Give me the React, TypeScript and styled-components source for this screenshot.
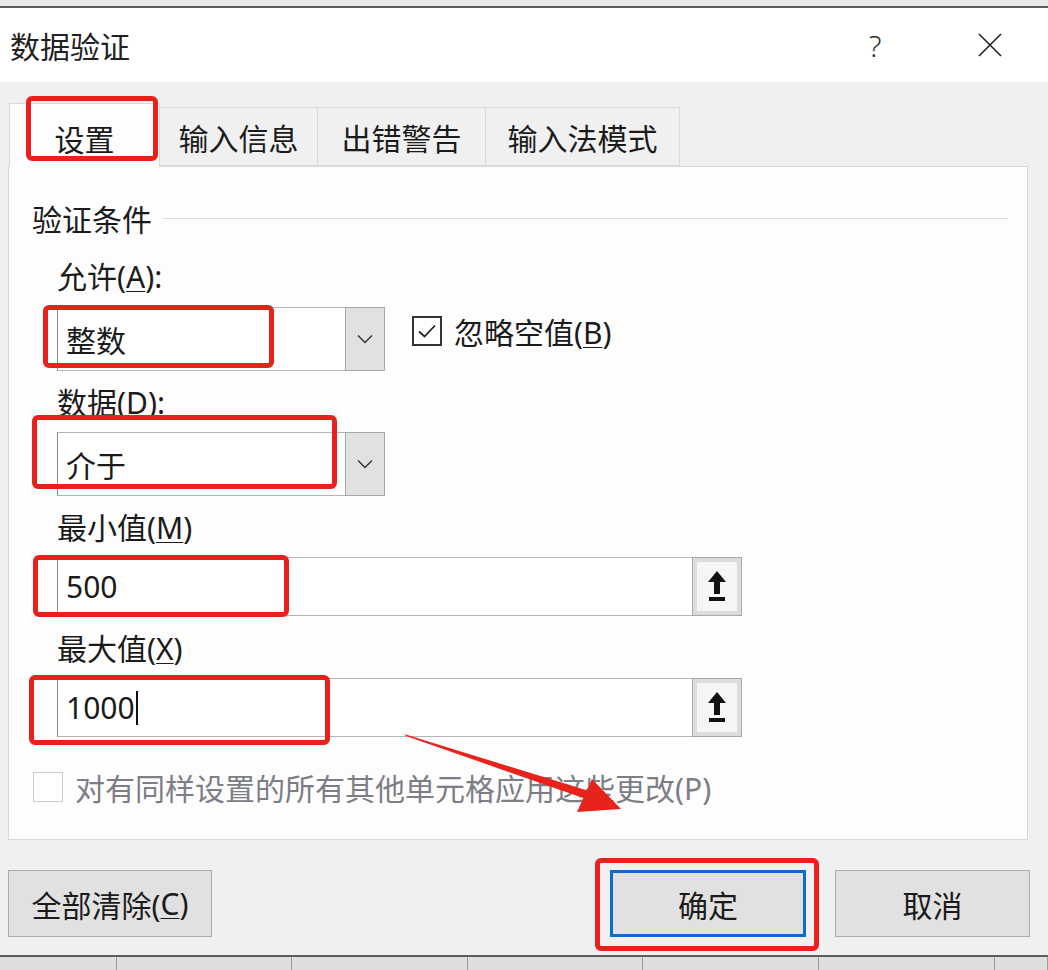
import React from 'react';
import styled, { createGlobalStyle } from 'styled-components';

const GlobalStyle = createGlobalStyle`
    html,
    body {
        margin: 0;
        padding: 0;
        background: #f0f0f0;
    }

    body {
        font-family: 'Noto Sans', 'Noto Sans CJK SC', sans-serif;
    }
`;

const Window = styled.div`
    position: relative;
    width: 1048px;
    height: 970px;
    display: flex;
    flex-direction: column;
    overflow: hidden;
    color: #1b1b1b;
    font-size: 30px;
`;

const TopEdge = styled.div`
    height: 6px;
    background: #e8e8e8;
    border-bottom: 2px solid #5c5c5c;
`;

const TitleBar = styled.div`
    height: 74px;
    background: #ffffff;
    display: flex;
    align-items: center;
    padding: 0 28px 0 10px;
`;

const Title = styled.div`
    flex: 1;
    font-size: 30px;
    color: #222;
`;

const TitleButton = styled.div`
    width: 60px;
    height: 60px;
    display: flex;
    align-items: center;
    justify-content: center;
    font-size: 30px;
    font-weight: 300;
    color: #333;

    & + & {
        margin-left: 55px;
    }
`;

const Body = styled.div`
    flex: 1;
    display: flex;
    flex-direction: column;
    background: #f0f0f0;
    padding: 21px 20px 0 8px;
`;

const TabStrip = styled.div`
    position: relative;
    z-index: 1;
    display: flex;
    align-items: flex-end;
    height: 63px;
    padding-left: 1px;
`;

const Tab = styled.div<{ $width: number; $active?: boolean }>`
    box-sizing: border-box;
    width: ${p => p.$width}px;
    height: ${p => (p.$active ? 64 : 59)}px;
    margin-bottom: ${p => (p.$active ? -1 : 0)}px;
    display: flex;
    align-items: center;
    justify-content: center;
    padding-top: ${p => (p.$active ? 4 : 0)}px;
    background: ${p => (p.$active ? '#fdfdfd' : '#f0f0f0')};
    border: 1px solid #d9d9d9;
    border-bottom: ${p => (p.$active ? 'none' : '1px solid #d9d9d9')};

    & + & {
        border-left: none;
    }
`;

const Panel = styled.div`
    box-sizing: border-box;
    width: 1020px;
    height: 674px;
    background: #fdfdfd;
    border: 1px solid #d9d9d9;
    padding: 0 19px 0 23px;
    display: flex;
    flex-direction: column;
`;

const GroupHeader = styled.div`
    display: flex;
    align-items: center;
    gap: 11px;
    height: 36px;
    margin-top: 33px;
`;

const GroupRule = styled.div`
    flex: 1;
    height: 1px;
    background: #dcdcdc;
`;

const FieldArea = styled.div`
    display: flex;
    flex-direction: column;
    padding-left: 25px;
`;

const FieldLabel = styled.div<{ $gap: number }>`
    height: 36px;
    line-height: 36px;
    margin-top: ${p => p.$gap}px;
    margin-bottom: ${p => (p.$gap > 20 ? 12 : 11)}px;
`;

const Key = styled.span`
    text-decoration: underline;
    text-underline-offset: 3px;
    text-decoration-thickness: 1px;
`;

const ComboRow = styled.div`
    display: flex;
    align-items: flex-start;
`;

const Combo = styled.div`
    display: flex;
    width: 328px;
    height: 64px;
`;

const InputField = styled.div`
    box-sizing: border-box;
    flex: 1;
    display: flex;
    align-items: center;
    padding-left: 8px;
    background: #ffffff;
    border: 1px solid #b4b4b4;
    border-left-color: #8a8a8a;
    border-right: none;
`;

const DropButton = styled.div`
    box-sizing: border-box;
    width: 40px;
    display: flex;
    align-items: center;
    justify-content: center;
    background: #e1e1e1;
    border: 1px solid #a8a8a8;
`;

const CheckOption = styled.label<{ $disabled?: boolean }>`
    display: flex;
    align-items: center;
    gap: 12px;
    height: 30px;
    color: ${p => (p.$disabled ? '#7d7d85' : 'inherit')};
`;

const OptionNextToCombo = styled(CheckOption)`
    margin: 9px 0 0 27px;
`;

const ApplyOption = styled(CheckOption)`
    margin: 35px 0 0 1px;
`;

const Box = styled.span<{ $disabled?: boolean }>`
    box-sizing: border-box;
    width: 30px;
    height: 30px;
    display: flex;
    align-items: center;
    justify-content: center;
    background: #ffffff;
    border: ${p => (p.$disabled ? '1px solid #cccccc' : '2px solid #333333')};
`;

const SpinInput = styled.div`
    display: flex;
    width: 685px;
    height: 59px;
`;

const SpinButton = styled.div`
    box-sizing: border-box;
    width: 50px;
    padding: 4px;
    background: #dcdcdc;
    border: 1px solid #a8a8a8;
`;

const SpinFace = styled.div`
    height: 100%;
    display: flex;
    align-items: center;
    justify-content: center;
    background: #f6f6f6;
`;

const Caret = styled.span`
    display: inline-block;
    width: 2px;
    height: 34px;
    margin-left: 1px;
    background: #111;
`;

const ButtonRow = styled.div`
    display: flex;
    margin: 30px -2px 0 0;
`;

const Button = styled.div<{ $width: number; $primary?: boolean }>`
    box-sizing: border-box;
    width: ${p => p.$width}px;
    height: 67px;
    display: flex;
    align-items: center;
    justify-content: center;
    background: #e1e1e1;
    border: ${p => (p.$primary ? '3px solid #0a6cd2' : '1px solid #adadad')};
`;

const Spacer = styled.div`
    flex: 1;
`;

const ButtonGap = styled.div`
    width: 29px;
`;

const BottomEdge = styled.div`
    height: 13px;
    display: flex;
    background: #dedede;
    border-top: 2px solid #5c5c5c;
`;

const GridCell = styled.div<{ $width: number }>`
    width: ${p => p.$width}px;
    border-right: 1px solid #9c9c9c;
    box-sizing: border-box;
`;

const Mark = styled.div<{ $x: number; $y: number; $w: number; $h: number }>`
    position: absolute;
    z-index: 2;
    left: ${p => p.$x}px;
    top: ${p => p.$y}px;
    width: ${p => p.$w}px;
    height: ${p => p.$h}px;
    box-sizing: border-box;
    border: 5px solid #e8221b;
    border-radius: 6px;
    pointer-events: none;
`;

const ArrowLayer = styled.svg`
    position: absolute;
    z-index: 2;
    left: 0;
    top: 0;
    pointer-events: none;
`;

const Chevron = () => (
    <svg width="16" height="10" viewBox="0 0 16 10">
        <path d="M1 1.5 L8 8.5 L15 1.5" fill="none" stroke="#333" strokeWidth="1.4" />
    </svg>
);

const UpArrow = () => (
    <svg width="20" height="34" viewBox="0 0 20 34">
        <path d="M10 1 L19 12 L13 12 L13 24 L7 24 L7 12 L1 12 Z" fill="#111" />
        <rect x="2" y="27" width="16" height="4" fill="#111" />
    </svg>
);

const Tick = () => (
    <svg width="20" height="16" viewBox="0 0 20 16">
        <path d="M2 8.5 L7.5 13.5 L18 2.5" fill="none" stroke="#222" strokeWidth="1.8" />
    </svg>
);

const CloseIcon = () => (
    <svg width="26" height="26" viewBox="0 0 26 26">
        <path d="M2 2 L24 24 M24 2 L2 24" stroke="#222" strokeWidth="1.6" />
    </svg>
);

const gridCells = [117, 175, 176, 175, 176, 176, 53];

const App = () => (
    <>
        <GlobalStyle />
        <Window>
            <TopEdge />
            <TitleBar>
                <Title>数据验证</Title>
                <TitleButton>?</TitleButton>
                <TitleButton>
                    <CloseIcon />
                </TitleButton>
            </TitleBar>

            <Body>
                <TabStrip>
                    <Tab $width={151} $active>
                        设置
                    </Tab>
                    <Tab $width={158}>输入信息</Tab>
                    <Tab $width={168}>出错警告</Tab>
                    <Tab $width={194}>输入法模式</Tab>
                </TabStrip>

                <Panel>
                    <GroupHeader>
                        验证条件
                        <GroupRule />
                    </GroupHeader>

                    <FieldArea>
                        <FieldLabel $gap={23}>
                            允许(<Key>A</Key>):
                        </FieldLabel>
                        <ComboRow>
                            <Combo>
                                <InputField>整数</InputField>
                                <DropButton>
                                    <Chevron />
                                </DropButton>
                            </Combo>
                            <OptionNextToCombo>
                                <Box>
                                    <Tick />
                                </Box>
                                <span>
                                    忽略空值(<Key>B</Key>)
                                </span>
                            </OptionNextToCombo>
                        </ComboRow>

                        <FieldLabel $gap={14}>
                            数据(<Key>D</Key>):
                        </FieldLabel>
                        <Combo>
                            <InputField>介于</InputField>
                            <DropButton>
                                <Chevron />
                            </DropButton>
                        </Combo>

                        <FieldLabel $gap={14}>
                            最小值(<Key>M</Key>)
                        </FieldLabel>
                        <SpinInput>
                            <InputField>500</InputField>
                            <SpinButton>
                                <SpinFace>
                                    <UpArrow />
                                </SpinFace>
                            </SpinButton>
                        </SpinInput>

                        <FieldLabel $gap={15}>
                            最大值(<Key>X</Key>)
                        </FieldLabel>
                        <SpinInput>
                            <InputField>
                                1000
                                <Caret />
                            </InputField>
                            <SpinButton>
                                <SpinFace>
                                    <UpArrow />
                                </SpinFace>
                            </SpinButton>
                        </SpinInput>
                    </FieldArea>

                    <ApplyOption $disabled>
                        <Box $disabled />
                        <span>对有同样设置的所有其他单元格应用这些更改(P)</span>
                    </ApplyOption>
                </Panel>

                <ButtonRow>
                    <Button $width={204}>
                        全部清除(<Key>C</Key>)
                    </Button>
                    <Spacer />
                    <Button $width={196} $primary>
                        确定
                    </Button>
                    <ButtonGap />
                    <Button $width={195}>取消</Button>
                </ButtonRow>
            </Body>

            <BottomEdge>
                {gridCells.map((w, i) => (
                    <GridCell key={i} $width={w} />
                ))}
            </BottomEdge>

            {/* red annotation marks drawn over the dialog */}
            <Mark $x={26} $y={96} $w={132} $h={65} />
            <Mark $x={43} $y={305} $w={231} $h={63} />
            <Mark $x={32} $y={415} $w={305} $h={74} />
            <Mark $x={33} $y={555} $w={256} $h={62} />
            <Mark $x={29} $y={675} $w={301} $h={70} />
            <Mark $x={595} $y={858} $w={224} $h={93} />

            <ArrowLayer width="1048" height="970" viewBox="0 0 1048 970">
                <polygon
                    points="404,734 406,736 586,799 589,791"
                    fill="#e8231c"
                />
                <polygon points="621,809 577,812 592,779" fill="#e8231c" />
            </ArrowLayer>
        </Window>
    </>
);

export default App;
